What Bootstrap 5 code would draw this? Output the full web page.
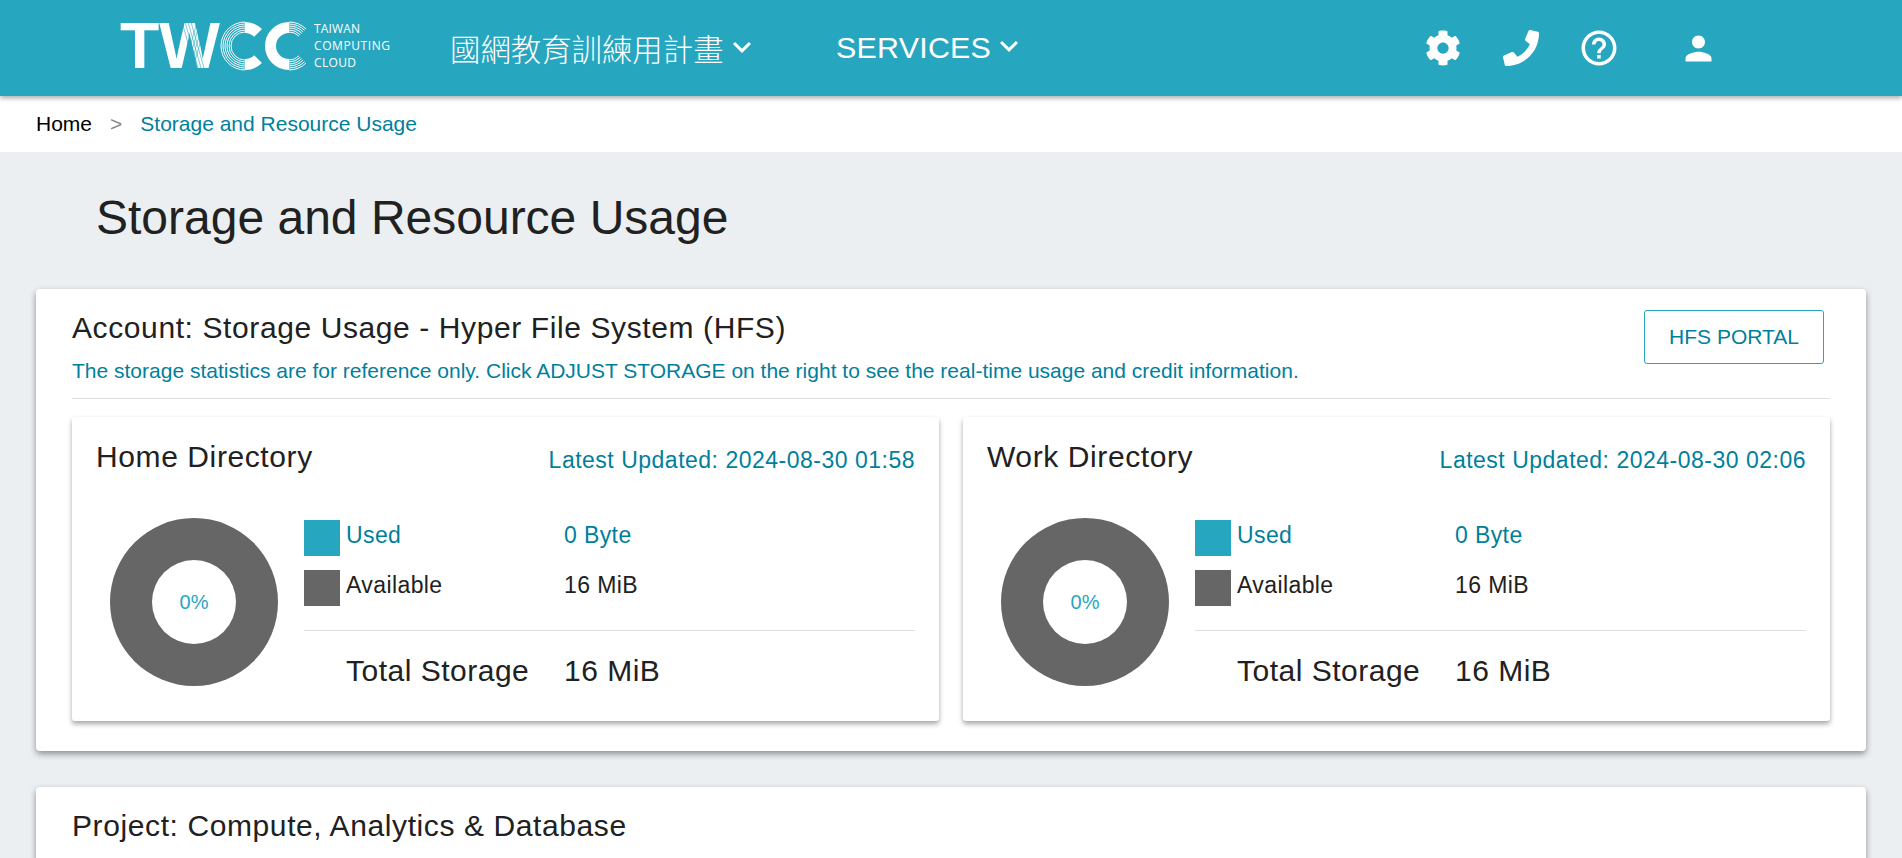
<!DOCTYPE html>
<html lang="en">
<head>
    <meta charset="utf-8">
    <meta name="viewport" content="width=device-width, initial-scale=1.0">
    <title>Storage and Resource Usage</title>
    <link href="https://cdn.jsdelivr.net/npm/bootstrap@5.3.0/dist/css/bootstrap.min.css" rel="stylesheet">
    <style>
        html, body { height: 100%; overflow: hidden; }
        body { background: #ebeff2; color: #212121; font-family: "Liberation Sans", Arial, sans-serif; }
        .twcc-top { height: 96px; background: #27a6bf; padding: 0 0 0 118px; box-shadow: 0 2px 5px rgba(0,0,0,.35); position: relative; z-index: 2; }
        .twcc-menu { color: #fff; font-size: 30.4px; line-height: 1; text-decoration: none; display: flex; align-items: center; }
        .twcc-menu:hover { color: #fff; }
        .twcc-menu svg { margin-bottom: 2px; }
        .twcc-menu.zh { font-family: "Liberation Sans", "Noto Sans CJK TC", sans-serif; margin-left: 58px; width: 312px; font-weight: 300; }
        .twcc-menu.zh span { padding-top: 4px; }
        .twcc-menu.en { margin-left: 74px; letter-spacing: .25px; padding-bottom: 2px; }
        .twcc-icons { margin-left: 394px; }
        .twcc-icon { display: flex; justify-content: center; align-items: center; width: 44px; height: 44px; fill: #fff; }
        .twcc-icon + .twcc-icon { margin-left: 34px; }
        .twcc-icon.person { margin-left: 55px; }
        .twcc-crumbs { height: 56px; background: #fff; padding: 0 36px; font-size: 21px; display: flex; align-items: center; }
        .twcc-crumbs .breadcrumb { --bs-breadcrumb-divider: ">"; --bs-breadcrumb-item-padding-x: 18px; --bs-breadcrumb-margin-bottom: 0; --bs-breadcrumb-divider-color: #888; }
        .twcc-crumbs a { color: #000; text-decoration: none; }
        .twcc-crumbs .active { color: #007f9c; }
        .twcc-page-title { font-size: 48px; line-height: 1.2; font-weight: 400; margin: 0; padding: 37px 0 42px 96px; }
        .twcc-panel { background: #fff; border-radius: 4px; margin: 0 36px 36px; padding: 21px 36px 30px; box-shadow: 0 3px 6px rgba(0,0,0,.4); }
        .twcc-panel-title { font-size: 30px; line-height: 34px; font-weight: 400; letter-spacing: .6px; margin: 0; padding-top: 1px; }
        .twcc-note { font-size: 21px; line-height: 24px; color: #007f9c; margin: 14px 0 0; }
        .twcc-head { height: 89px; border-bottom: 1px solid #e0e0e0; margin-bottom: 18px; }
        .twcc-outline { color: #007f9c; border: 1px solid #27a6bf; border-radius: 3px; font-size: 21px; line-height: 24px; padding: 14px 24px; margin: 0 6px 0 0; background: #fff; }
        .twcc-dir { flex: 1 1 0; height: 304px; background: #fff; border-radius: 3px; padding: 20px 24px; box-shadow: 0 3px 5px rgba(0,0,0,.35); }
        .twcc-dir-title { font-size: 30px; line-height: 40px; font-weight: 400; letter-spacing: .6px; margin: 0; }
        .twcc-updated { color: #007f9c; font-size: 23px; line-height: 28px; letter-spacing: .5px; padding-top: 9px; }
        .twcc-donut { width: 168px; height: 168px; border-radius: 50%; background: #666; margin: 41px 26px 0 14px; flex: none; display: flex; align-items: center; justify-content: center; }
        .twcc-hole { width: 84px; height: 84px; border-radius: 50%; background: #fff; color: #27a6bf; font-size: 20px; display: flex; align-items: center; justify-content: center; }
        .twcc-legend { flex: 1 1 auto; padding-top: 43px; }
        .twcc-line { display: flex; align-items: flex-start; font-size: 23px; height: 36px; line-height: 30px; margin-bottom: 14px; letter-spacing: .4px; }
        .twcc-line.used { color: #007f9c; }
        .twcc-swatch { width: 36px; height: 36px; flex: none; margin-right: 6px; background: #666; }
        .twcc-line.used .twcc-swatch { background: #27a6bf; }
        .twcc-label { width: 218px; }
        .twcc-total { border-top: 1px solid #e0e0e0; margin-top: 24px; padding: 20px 0 0 42px; font-size: 30px; line-height: 40px; display: flex; letter-spacing: .5px; }
        .twcc-total .twcc-label { width: 218px; }
    </style>
</head>
<body>

<nav class="twcc-top d-flex align-items-center">
    <svg width="274" height="96" viewBox="118 0 274 96" role="img" aria-label="TWCC Taiwan Computing Cloud">
        <text x="120" y="68" font-family="Liberation Sans" font-weight="700" font-size="65" fill="#fff" textLength="100" lengthAdjust="spacingAndGlyphs">TW</text>
        <g stroke="#27a6bf" stroke-width=".6" fill="none">
            <path d="M182 22l13 46M185 22l13 46M188 22l13 46M191 22l13 46M206 22l-13 46M203 22l-13 46M200 22l-13 46M197 22l-13 46"/>
        </g>
        <g fill="none" stroke="#fff">
            <!-- first C: hatched on the left, solid stubs on the right -->
            <path d="M245 22a24 24 0 0 0 0 48M245 24a22 22 0 0 0 0 44M245 26a20 20 0 0 0 0 40M245 28a18 18 0 0 0 0 36M245 30a16 16 0 0 0 0 32M245 32a14 14 0 0 0 0 28" stroke-width="1"/>
            <path d="M245 27.500a18.500 18.500 0 0 1 13.100 5.400M245 64.500a18.500 18.500 0 0 0 13.100-5.400" stroke-width="11"/>
            <!-- second C: solid on the left, hatched on the right -->
            <path d="M289 27.500a18.500 18.500 0 0 0 0 37" stroke-width="11"/>
            <path d="M289 22a24 24 0 0 1 17 7M289 24a22 22 0 0 1 15.600 6.400M289 26a20 20 0 0 1 14.100 5.900M289 28a18 18 0 0 1 12.700 5.300M289 30a16 16 0 0 1 11.300 4.700M289 32a14 14 0 0 1 9.900 4.100M289 70a24 24 0 0 0 17-7M289 68a22 22 0 0 0 15.600-6.400M289 66a20 20 0 0 0 14.100-5.900M289 64a18 18 0 0 0 12.700-5.300M289 62a16 16 0 0 0 11.300-4.700M289 60a14 14 0 0 0 9.900-4.100" stroke-width="1"/>
        </g>
        <g font-family="Open Sans" font-size="12" fill="#fff">
            <text x="314" y="33" textLength="46">TAIWAN</text>
            <text x="314" y="50" textLength="76">COMPUTING</text>
            <text x="314" y="67" textLength="42">CLOUD</text>
        </g>
    </svg>
    <a class="twcc-menu zh" href="#"><span>國網教育訓練用計畫</span>
        <svg width="36" height="36" viewBox="0 0 24 24" fill="#fff"><path d="M16.590 8.590L12 13.170 7.410 8.590 6 10l6 6 6-6z"/></svg>
    </a>
    <a class="twcc-menu en" href="#">SERVICES
        <svg width="36" height="36" viewBox="0 0 24 24" fill="#fff"><path d="M16.590 8.590L12 13.170 7.410 8.590 6 10l6 6 6-6z"/></svg>
    </a>
    <div class="twcc-icons d-flex align-items-center">
        <span class="twcc-icon"><svg width="36" height="36" viewBox="0 0 512 512"><path d="M487.4 315.700l-42.600-24.600c4.300-23.200 4.300-47 0-70.200l42.600-24.600c4.900-2.800 7.100-8.600 5.500-14-11.100-35.600-30-67.800-54.700-94.600-3.800-4.100-10-5.100-14.800-2.300L380.800 110c-17.900-15.400-38.500-27.300-60.800-35.100V25.800c0-5.600-3.900-10.500-9.400-11.700-36.700-8.200-74.300-7.800-109.200 0-5.500 1.200-9.400 6.100-9.400 11.700V75c-22.200 7.900-42.800 19.800-60.800 35.100L88.700 85.500c-4.900-2.800-11-1.900-14.800 2.300-24.700 26.700-43.600 58.900-54.700 94.600-1.700 5.400.6 11.200 5.500 14L67.300 221c-4.300 23.200-4.300 47 0 70.200l-42.600 24.600c-4.900 2.800-7.100 8.600-5.500 14 11.100 35.600 30 67.800 54.700 94.600 3.800 4.100 10 5.100 14.800 2.300l42.600-24.600c17.900 15.400 38.500 27.300 60.800 35.100v49.200c0 5.600 3.900 10.500 9.400 11.700 36.700 8.200 74.300 7.800 109.200 0 5.500-1.200 9.400-6.100 9.400-11.700v-49.200c22.200-7.900 42.800-19.800 60.800-35.100l42.600 24.600c4.900 2.800 11 1.900 14.800-2.300 24.700-26.700 43.600-58.900 54.700-94.600 1.500-5.500-.7-11.300-5.600-14.100zM256 336c-44.100 0-80-35.900-80-80s35.900-80 80-80 80 35.900 80 80-35.900 80-80 80z"/></svg></span>
        <span class="twcc-icon"><svg width="36" height="36" viewBox="0 0 512 512"><path d="M493.400 24.600l-104-24c-11.300-2.600-22.900 3.300-27.500 13.900l-48 112c-4.200 9.800-1.400 21.300 6.900 28l60.600 49.600c-36 76.700-98.900 140.500-177.200 177.200l-49.600-60.600c-6.800-8.300-18.200-11.100-28-6.900l-112 48C3.900 366.500-2 378.100.6 389.400l24 104C27.100 504.200 36.700 512 48 512c256.100 0 464-207.500 464-464 0-11.200-7.700-20.900-18.600-23.400z"/></svg></span>
        <span class="twcc-icon"><svg width="42" height="42" viewBox="0 0 24 24"><path d="M11 18h2v-2h-2v2zm1-16C6.480 2 2 6.480 2 12s4.480 10 10 10 10-4.480 10-10S17.520 2 12 2zm0 18c-4.410 0-8-3.590-8-8s3.590-8 8-8 8 3.590 8 8-3.590 8-8 8zm0-14c-2.210 0-4 1.790-4 4h2c0-1.100.9-2 2-2s2 .9 2 2c0 2-3 1.750-3 5h2c0-2.250 3-2.500 3-5 0-2.210-1.790-4-4-4z"/></svg></span>
        <span class="twcc-icon person"><svg width="39" height="39" viewBox="0 0 24 24"><path d="M12 12c2.210 0 4-1.790 4-4s-1.790-4-4-4-4 1.790-4 4 1.790 4 4 4zm0 2c-2.670 0-8 1.340-8 4v2h16v-2c0-2.660-5.330-4-8-4z"/></svg></span>
    </div>
</nav>

<div class="twcc-crumbs">
    <ol class="breadcrumb">
        <li class="breadcrumb-item"><a href="#">Home</a></li>
        <li class="breadcrumb-item active">Storage and Resource Usage</li>
    </ol>
</div>

<h1 class="twcc-page-title">Storage and Resource Usage</h1>

<section class="twcc-panel">
    <div class="twcc-head d-flex justify-content-between">
        <div>
            <h2 class="twcc-panel-title">Account: Storage Usage - Hyper File System (HFS)</h2>
            <p class="twcc-note">The storage statistics are for reference only. Click ADJUST STORAGE on the right to see the real-time usage and credit information.</p>
        </div>
        <div><button type="button" class="btn twcc-outline">HFS PORTAL</button></div>
    </div>
    <div class="d-flex gap-4">
        <div class="twcc-dir">
            <div class="d-flex justify-content-between">
                <h3 class="twcc-dir-title">Home Directory</h3>
                <div class="twcc-updated">Latest Updated: 2024-08-30 01:58</div>
            </div>
            <div class="d-flex">
                <div class="twcc-donut"><div class="twcc-hole">0%</div></div>
                <div class="twcc-legend">
                    <div class="twcc-line used"><span class="twcc-swatch"></span><span class="twcc-label">Used</span><span>0 Byte</span></div>
                    <div class="twcc-line"><span class="twcc-swatch"></span><span class="twcc-label">Available</span><span>16 MiB</span></div>
                    <div class="twcc-total"><span class="twcc-label">Total Storage</span><span>16 MiB</span></div>
                </div>
            </div>
        </div>
        <div class="twcc-dir">
            <div class="d-flex justify-content-between">
                <h3 class="twcc-dir-title">Work Directory</h3>
                <div class="twcc-updated">Latest Updated: 2024-08-30 02:06</div>
            </div>
            <div class="d-flex">
                <div class="twcc-donut"><div class="twcc-hole">0%</div></div>
                <div class="twcc-legend">
                    <div class="twcc-line used"><span class="twcc-swatch"></span><span class="twcc-label">Used</span><span>0 Byte</span></div>
                    <div class="twcc-line"><span class="twcc-swatch"></span><span class="twcc-label">Available</span><span>16 MiB</span></div>
                    <div class="twcc-total"><span class="twcc-label">Total Storage</span><span>16 MiB</span></div>
                </div>
            </div>
        </div>
    </div>
</section>

<section class="twcc-panel">
    <h2 class="twcc-panel-title">Project: Compute, Analytics &amp; Database</h2>
</section>

<script src="https://cdn.jsdelivr.net/npm/bootstrap@5.3.0/dist/js/bootstrap.bundle.min.js"></script>
</body>
</html>
